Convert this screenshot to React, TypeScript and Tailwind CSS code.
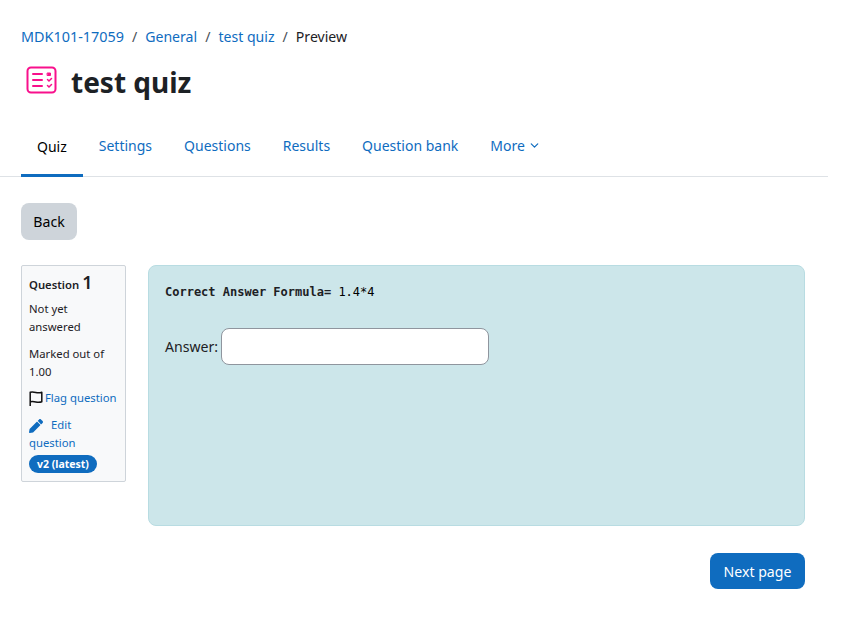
import * as React from 'react';
import { ChevronDown } from 'lucide-react';

const tabs = ['Settings', 'Questions', 'Results', 'Question bank'];

function QuizIcon() {
  return (
    <svg width="31" height="28" viewBox="0 0 31 28" fill="none" stroke="#f8108c" strokeWidth="2" strokeLinecap="round">
      <rect x="1.5" y="1.5" width="28" height="25" rx="3.5" />
      <path d="M7 8h9M7 14h9M7 20h9" />
      <path d="M21.5 7h3v2.5h-3z" fill="#f8108c" strokeWidth="1" />
      <path d="M21.5 13.5l1.5 1.5 2.5-2.5M21.5 19.5l1.5 1.5 2.5-2.5" strokeWidth="1.5" />
    </svg>
  );
}

function FlagIcon() {
  return (
    <svg width="14" height="15" viewBox="0 0 14 15" fill="none" stroke="#111" strokeWidth="1.5" className="shrink-0">
      <path d="M1.2 15V1.2c2-.6 3.6-.3 5.6.2 2 .5 3.6.6 6-.2v9.6c-2.4.8-4 .6-6 .1-2-.5-3.6-.7-5.6-.1" strokeLinejoin="round" />
    </svg>
  );
}

function PencilIcon() {
  return (
    <svg width="14" height="14" viewBox="0 0 512 512" fill="#0f6cbf" className="shrink-0">
      <path d="M497.9 142.1l-46.1 46.1c-4.7 4.7-12.3 4.7-17 0l-111-111c-4.7-4.7-4.7-12.3 0-17l46.1-46.1c18.7-18.7 49.1-18.7 67.9 0l60.1 60.1c18.8 18.7 18.8 49.1 0 67.9zM284.2 99.8L21.6 362.4.4 483.9c-2.9 16.4 11.4 30.6 27.8 27.8l121.5-21.3 262.6-262.6c4.7-4.7 4.7-12.3 0-17l-111-111c-4.8-4.7-12.4-4.7-17.1 0z" />
    </svg>
  );
}

export default function App() {
  return (
    <div className="min-h-[620px] w-[864px] bg-white text-[#1d2125] font-['Noto_Sans',sans-serif] text-[14.1px]">
      <div className="w-[828px]">
        <header className="px-[21px] pt-[26px]">
          <nav className="flex h-[21px] items-center gap-[8px] leading-[21px]">
            <a className="text-[14.4px] text-[#0f6cbf]">MDK101-17059</a>
            <span className="text-[#495057]">/</span>
            <a className="text-[#0f6cbf]">General</a>
            <span className="text-[#495057]">/</span>
            <a className="text-[#0f6cbf]">test quiz</a>
            <span className="text-[#495057]">/</span>
            <span>Preview</span>
          </nav>
          <div className="mt-[13px] flex h-[40px] items-center pl-[5px]">
            <QuizIcon />
            <h1 className="ml-[14px] mt-[4px] text-[28px] font-bold leading-[36px]">test quiz</h1>
          </div>
        </header>
        <div className="mt-[22px] flex h-[55px] border-b border-[#dee2e6] px-[21px] text-[14px]">
          <a className="-mb-px flex items-center border-b-[3px] border-[#0f6cbf] px-[16px] pb-[4px] text-black">Quiz</a>
          {tabs.map(t => (
            <a key={t} className="flex items-center px-[16px] pb-[7px] text-[#0f6cbf]">{t}</a>
          ))}
          <a className="flex items-center gap-[3px] px-[16px] pb-[7px] text-[#0f6cbf]">
            More <ChevronDown size={13} strokeWidth={2.25} />
          </a>
        </div>
      </div>

      <div className="px-[21px] pt-[26px]">
        <button className="h-[37px] w-[56px] rounded-[8px] bg-[#ced4da] text-black">Back</button>

        <div className="mt-[25px] flex w-[784px] items-start gap-[22px]">
          <aside className="w-[105px] shrink-0 rounded-[2px] border border-[#ced4da] bg-[#f8f9fa] px-[7px] pt-[7px] pb-[8px] text-[11.3px] leading-[18px]">
            <h3 className="flex h-[21px] items-baseline font-semibold">
              Question <span className="ml-[3px] text-[18px] font-semibold">1</span>
            </h3>
            <div className="mt-[6px]">Not yet answered</div>
            <div className="mt-[9px]">Marked out of 1.00</div>
            <div className="mt-[8px] flex items-center gap-[2px] text-[#0f6cbf]">
              <FlagIcon />
              <a className="whitespace-nowrap">Flag question</a>
            </div>
            <div className="mt-[9px] text-[#0f6cbf]">
              <span className="inline-flex items-center align-middle"><PencilIcon /></span>
              <a className="ml-[8px]">Edit question</a>
            </div>
            <span className="mt-[3px] inline-flex h-[18px] items-center rounded-full bg-[#0f6cbf] px-[8px] text-[10.5px] font-bold text-white">
              v2 (latest)
            </span>
          </aside>

          <div className="flex-1">
            <section className="h-[261px] rounded-[8px] border border-[#b8dce2] bg-[#cce6ea] px-[16px] pt-[18px]">
              <div className="font-['DejaVu_Sans_Mono',monospace] text-[12px] font-bold leading-[16px] text-[#1d2125]">
                Correct Answer Formula= <span className="font-normal text-black">1.4*4</span>
              </div>
              <div className="mt-[28px] flex items-center gap-[3px]">
                <label>Answer:</label>
                <input className="h-[37px] w-[268px] rounded-[8px] border border-[#8f959e] bg-white" />
              </div>
            </section>
            <div className="mt-[27px] flex justify-end">
              <button className="h-[36px] w-[95px] rounded-[8px] bg-[#0f6cbf] pt-[2px] text-white">Next page</button>
            </div>
          </div>
        </div>
      </div>
    </div>
  );
}
